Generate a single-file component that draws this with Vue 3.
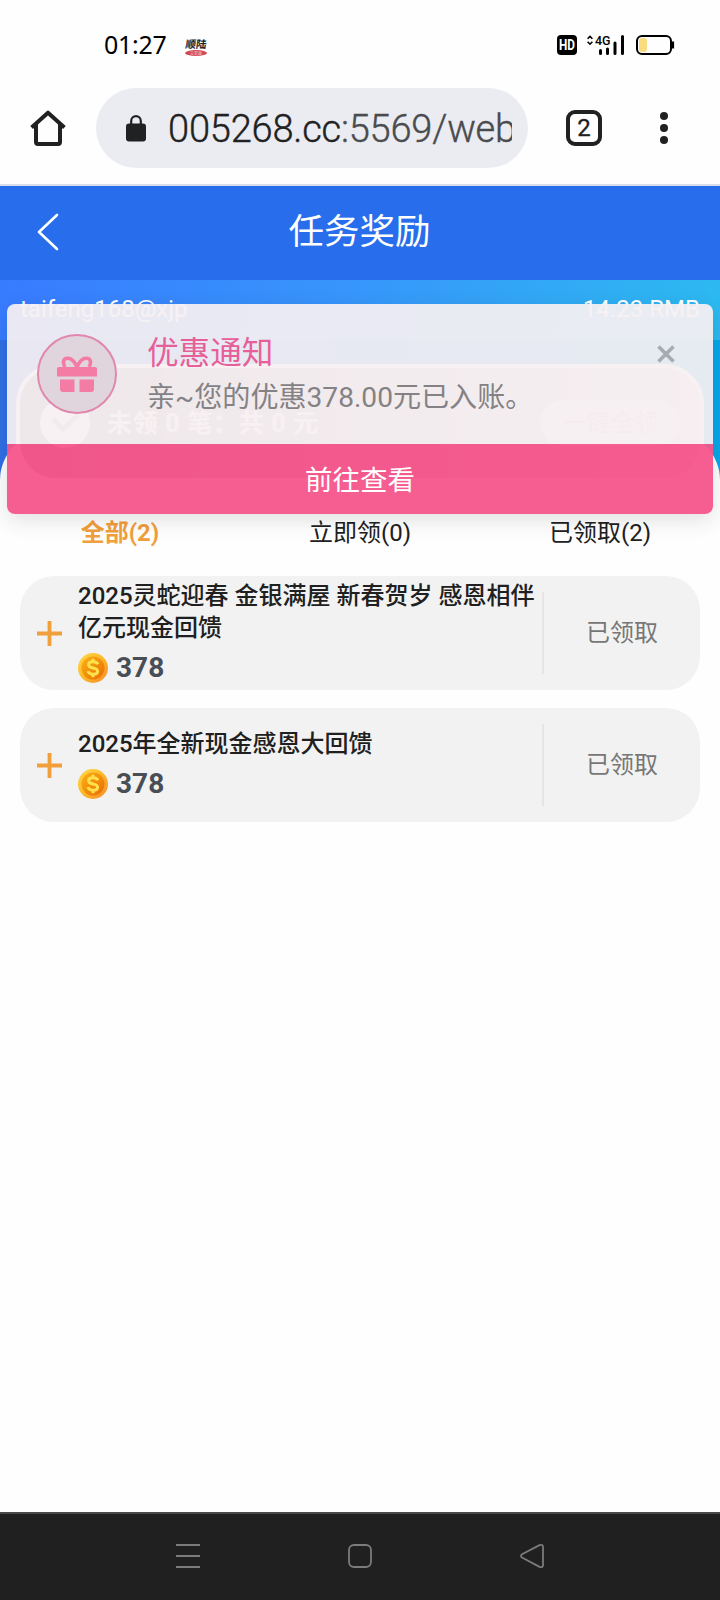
<script setup>
const tabs = [
  { label: '全部(2)', active: true },
  { label: '立即领(0)', active: false },
  { label: '已领取(2)', active: false },
]
const rewards = [
  { title: '2025灵蛇迎春 金银满屋 新春贺岁 感恩相伴亿元现金回馈', amount: 378, status: '已领取' },
  { title: '2025年全新现金感恩大回馈', amount: 378, status: '已领取' },
]
</script>

<template>
  <div class="screen">
    <div class="status">
      <span class="clock">01:27</span>
      <span class="app-badge">
        <b>顺陆</b>
        <i>交易版</i>
      </span>
      <svg class="status-icons" width="120" height="22" viewBox="0 0 120 22">
        <rect x="1" y="1" width="20" height="20" rx="4" fill="#000" />
        <text x="11" y="16.200" text-anchor="middle" font-size="14.500" font-weight="700" fill="#fff" textLength="16" lengthAdjust="spacingAndGlyphs">HD</text>
        <path d="M31.600 4.800 34 2.400l2.400 2.400M31.600 7.800 34 10.200l2.400-2.400" fill="none" stroke="#000" stroke-width="1.600" />
        <text x="39" y="11" font-size="13.500" font-weight="500" fill="#000" textLength="15.500" lengthAdjust="spacingAndGlyphs">4G</text>
        <path d="M44.500 16.500v3M51.500 15v4.500M59 9v10.500M66.500 2.500v17" stroke="#000" stroke-width="3" stroke-linecap="round" fill="none" />
        <rect x="81" y="2" width="34" height="18" rx="5" fill="none" stroke="#000" stroke-width="2" />
        <rect x="83" y="4" width="8" height="14" rx="3" fill="#f9dc7c" />
        <path d="M117 7.500v7" stroke="#000" stroke-width="2.200" />
      </svg>
    </div>

    <div class="browser">
      <svg class="home" width="36" height="36" viewBox="0 0 36 36">
        <path d="M1.600 17.600 18 2.700 34.400 17.600M6 14.500V32q0 2 2 2h20q2 0 2-2V14.500" fill="none" stroke="#202122" stroke-width="4" stroke-linejoin="round" />
      </svg>
      <div class="omnibox">
        <svg width="20" height="27" viewBox="0 0 20 27">
          <path d="M5.200 10V6a4.800 4.800 0 0 1 9.600 0v4" fill="none" stroke="#202122" stroke-width="2.200" />
          <rect x="0" y="8.500" width="20" height="18" rx="3" fill="#202122" />
        </svg>
        <span class="url">005268.cc<em>:5569/web</em></span>
      </div>
      <div class="tab-count">2</div>
      <svg class="dots" width="8" height="32" viewBox="0 0 8 32">
        <circle cx="4" cy="4" r="4" /><circle cx="4" cy="16" r="4" /><circle cx="4" cy="28" r="4" />
      </svg>
    </div>

    <div class="header">
      <svg class="back" width="24" height="40" viewBox="0 0 24 40">
        <path d="M21 3 3 20l18 17" fill="none" stroke="#fff" stroke-width="2.600" stroke-linecap="round" stroke-linejoin="round" />
      </svg>
      <h1>任务奖励</h1>
    </div>

    <div class="hero">
      <div class="account"><span>taifeng168@xjp</span><span>14.23 RMB</span></div>
      <div class="summary">
        <svg width="50" height="50" viewBox="0 0 50 50">
          <circle cx="25" cy="25" r="25" fill="#fff" />
          <path d="m13 21 10 10 15-14" fill="none" stroke="#b8a8ab" stroke-width="5" />
        </svg>
        <strong>未领 0 笔：共 0 元</strong>
        <span class="claim">一键全领</span>
      </div>
      <div class="notice">
        <div class="notice-main">
          <div class="gift">
            <svg width="40" height="37" viewBox="0 0 40 37">
              <path d="M20 11C17 4 13 2 10 2.300 6 2.700 5.500 7 8 11M20 11c3-7 7-9 10-8.700 4 .4 4.500 4.700 2 8.700" fill="none" stroke="#f37ba4" stroke-width="3.600" />
              <path d="M2 11h36q2 0 2 2v7.500H0V13q0-2 2-2zM3 23.500h14.500V36H6q-3 0-3-3zM22.500 23.500H37V33q0 3-3 3H22.500z" fill="#f37ba4" />
            </svg>
          </div>
          <div class="notice-text">
            <div class="notice-title">优惠通知</div>
            <div class="notice-desc">亲~您的优惠378.00元已入账。</div>
          </div>
          <svg class="close" width="18" height="18" viewBox="0 0 18 18">
            <path d="m1.500 1.500 15 15m0-15-15 15" stroke="#a3acb0" stroke-width="3.600" />
          </svg>
        </div>
        <div class="notice-go">前往查看</div>
      </div>
    </div>

    <div class="panel">
      <div class="tabs">
        <span v-for="t in tabs" :key="t.label" :class="{ active: t.active }">{{ t.label }}</span>
      </div>
      <div class="list">
        <div v-for="r in rewards" :key="r.title" class="card">
          <svg class="plus" width="25" height="25" viewBox="0 0 25 25">
            <path d="M12.500 0v25M0 12.500h25" stroke="#f19e3c" stroke-width="3.800" />
          </svg>
          <div class="info">
            <div class="title">{{ r.title }}</div>
            <div class="amount">
              <svg width="30" height="30" viewBox="0 0 30 30">
                <defs>
                  <linearGradient id="rim" x1="0" y1="0" x2="1" y2="1">
                    <stop offset="0" stop-color="#ffd84a" /><stop offset=".5" stop-color="#fcb928" /><stop offset="1" stop-color="#f58a2a" />
                  </linearGradient>
                  <linearGradient id="face" x1="0" y1="0" x2="1" y2="1">
                    <stop offset="0" stop-color="#fbb314" /><stop offset="1" stop-color="#e86b04" />
                  </linearGradient>
                </defs>
                <circle cx="15" cy="15" r="15" fill="url(#rim)" />
                <circle cx="15" cy="15" r="11.500" fill="url(#face)" />
                <path d="M19.800 11.300q-.8-2.600-4.600-2.600c-6 0-6 5.300-.4 6.200 6.600 1 6.200 6.300.2 6.300q-4.200 0-5-3M15 5.800v3M15 21.200v3" fill="none" stroke="#ffe14d" stroke-width="3" />
              </svg>
              <b>{{ r.amount }}</b>
            </div>
          </div>
          <div class="state">{{ r.status }}</div>
        </div>
      </div>
    </div>

    <div class="nav">
      <svg width="26" height="26" viewBox="0 0 26 26"><path d="M1 2h24M1 13h24M1 24h24" /></svg>
      <svg width="26" height="26" viewBox="0 0 26 26"><rect x="2" y="2" width="22" height="22" rx="5" /></svg>
      <svg width="26" height="26" viewBox="0 0 26 26"><path d="M3 11.300Q1 13 3 14.500L20.500 23.800Q24 25 24 22V4Q24 1 20.500 2.200Z" /></svg>
    </div>
  </div>
</template>

<style>
html, body { background: #fff; }
</style>

<style scoped>
.screen {
  width: 720px;
  height: 1600px;
  display: flex;
  flex-direction: column;
  overflow: hidden;
  background: #fefefe;
  font-family: Roboto, "Noto Sans CJK SC", sans-serif;
  color: #202020;
}
.status {
  height: 88px;
  box-sizing: border-box;
  padding: 2px 44px 0 104px;
  display: flex;
  align-items: center;
  flex: none;
}
.clock {
  width: 81px;
  margin-top: -2px;
  font: 25px/30px "Noto Sans", sans-serif;
  letter-spacing: -0.3px;
  color: #000;
}
.app-badge {
  width: 22px;
  margin-top: 4px;
  text-align: center;
  white-space: nowrap;
}
.app-badge b {
  display: block;
  font-size: 10.5px;
  line-height: 11px;
  font-weight: 700;
  transform: skewX(-8deg);
  color: #222;
}
.app-badge i {
  display: block;
  height: 6px;
  border-radius: 50%;
  background: #d44850;
  color: #f6d0d0;
  font: 4px/6px "Noto Sans CJK SC", sans-serif;
}
.status-icons { margin-left: auto; }
.browser {
  height: 98px;
  box-sizing: border-box;
  border-bottom: 2px solid #d9dfea;
  padding: 0 52px 16px 30px;
  display: flex;
  align-items: center;
  flex: none;
}
.omnibox {
  width: 432px;
  height: 80px;
  box-sizing: border-box;
  margin: 0 38px 0 30px;
  padding: 0 16px 0 30px;
  border-radius: 40px;
  background: #ebecf1;
  display: flex;
  align-items: center;
  gap: 22px;
}
.omnibox svg { flex: none; }
.url {
  flex: 1;
  overflow: hidden;
  white-space: nowrap;
  padding-top: 2px;
  font: 300 38px/50px Roboto, sans-serif;
  letter-spacing: -0.2px;
  -webkit-text-stroke: 0.4px currentColor;
  color: #202122;
}
.url em { font-style: normal; color: #4a4b4e; }
.tab-count {
  width: 36px;
  height: 36px;
  box-sizing: border-box;
  border: 4px solid #202122;
  border-radius: 9px;
  text-align: center;
  font: 400 24px/28px Roboto, sans-serif;
  -webkit-text-stroke: 0.3px currentColor;
}
.dots { margin-left: auto; fill: #202122; }
.header {
  height: 94px;
  flex: none;
  display: flex;
  align-items: center;
  background: #286deb;
  color: #fff;
}
.back { margin: -2px 0 0 36px; width: 24px; }
.header h1 {
  flex: 1;
  margin: 0 61px 0 0;
  padding-bottom: 3px;
  text-align: center;
  font-size: 35.5px;
  font-weight: 400;
  line-height: 50px;
}
.hero {
  position: relative;
  z-index: 2;
  height: 152px;
  flex: none;
  background: linear-gradient(90deg, #306fe4, #06a7ea);
}
.account {
  height: 60px;
  box-sizing: border-box;
  padding: 0 20px;
  display: flex;
  justify-content: space-between;
  align-items: center;
  background: linear-gradient(100deg, #387bff, #3797fb 50%, #2cbaf0);
  font-size: 24px;
  line-height: 58px;
  color: #fff;
}
.account span { height: 60px; }
.summary {
  position: relative;
  height: 118px;
  box-sizing: border-box;
  margin: 24px 16px 0;
  border: 4px solid #fff;
  border-radius: 40px;
  padding: 0 20px 0 20px;
  display: flex;
  align-items: center;
  background: linear-gradient(90deg, #84767a, #b8a8ab 45%, #e6d6d8);
  color: #fff;
}
.summary strong { margin-left: 17px; font-size: 25px; white-space: pre; letter-spacing: .7px; margin-top: -4px; }
.claim {
  margin-left: auto;
  width: 140px;
  border-radius: 24px;
  text-align: center;
  background: #f8eeee;
  color: #c8b8b8;
  font-size: 24px;
  line-height: 46px;
}
.notice {
  position: absolute;
  left: 7px;
  top: 24px;
  width: 706px;
  height: 210px;
  border-radius: 8px;
  overflow: hidden;
  box-shadow: 0 6px 22px rgba(0, 0, 0, .12);
}
.notice-main {
  height: 140px;
  box-sizing: border-box;
  display: flex;
  align-items: flex-start;
  padding: 30px 38px 0 30px;
  background: rgba(246, 240, 242, .935);
}
.gift {
  width: 80px;
  height: 80px;
  box-sizing: border-box;
  border: 2px solid #e187ad;
  border-radius: 50%;
  background: #e1d5dd;
  display: flex;
  justify-content: center;
  align-items: center;
}
.notice-text { margin: -3px 0 0 30px; flex: 1; white-space: nowrap; }
.notice-title { font-size: 31.600px; line-height: 46px; color: #e75f98; }
.notice-desc { font-size: 28.100px; line-height: 42px; color: #848284; }
.close { margin-top: 11px; }
.notice-go {
  height: 70px;
  background: rgba(245, 84, 138, .95);
  color: #fff;
  text-align: center;
  font-size: 27.500px;
  line-height: 73px;
}
.panel {
  position: relative;
  flex: 1;
  background: linear-gradient(90deg, #306fe4, #06a7ea) 0 0 / 100% 60px no-repeat, #fefefe;
}
.panel::before {
  content: "";
  display: block;
  height: 80px;
  border-radius: 48px 48px 0 0;
  background: #fefefe;
}
.tabs {
  height: 40px;
  display: grid;
  grid-template-columns: repeat(3, 1fr);
  text-align: center;
  font-size: 24px;
  line-height: 42px;
}
.tabs .active { color: #f19e3c; font-weight: 700; }
.list {
  display: flex;
  flex-direction: column;
  gap: 18px;
  padding: 24px 20px 0;
}
.card {
  height: 114px;
  display: flex;
  align-items: center;
  border-radius: 34px;
  background: #f2f2f2;
}
.plus { margin: 0 16px 0 17px; flex: none; }
.info { flex: 1; min-width: 0; padding-top: 1px; }
.title { font-size: 24px; line-height: 32px; font-weight: 500; margin-right: -2px; }
.amount { display: flex; align-items: center; gap: 8px; height: 40px; padding-top: 4px; }
.amount b { font-size: 28px; color: #494d55; }
.state {
  width: 156px;
  height: 82px;
  border-left: 2px solid #e5e5e5;
  text-align: center;
  font-size: 24px;
  line-height: 82px;
  color: #777;
}
.nav {
  height: 88px;
  box-sizing: border-box;
  flex: none;
  border-top: 2px solid #48484a;
  background: #202020;
  display: flex;
  justify-content: space-between;
  align-items: center;
  padding: 0 175px 2px;
}
.nav svg { fill: none; stroke: #7b7b7b; stroke-width: 1.800; }
</style>
